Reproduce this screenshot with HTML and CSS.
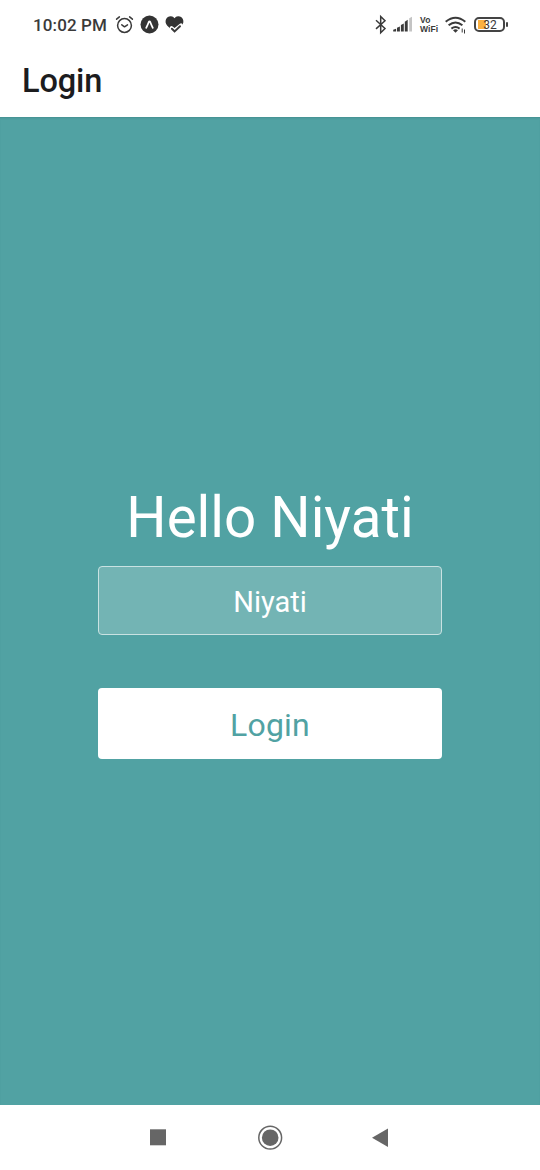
FILE: index.html
```html
<!DOCTYPE html>
<html lang="en">
<head>
<meta charset="utf-8">
<title>Login</title>
<link rel="stylesheet" href="styles.css">
</head>
<body>
<div class="screen">
  <div class="status">
    <span class="clock">10:02 PM</span>
    <svg class="status-left" width="74" height="24" viewBox="114 13 74 24" fill="none" stroke="#3a3a3a" stroke-linecap="round" stroke-linejoin="round">
      <circle cx="124.500" cy="25.500" r="6.900" stroke-width="1.500"/>
      <path d="M116.600 19.200l2.800-2.300M129.600 16.900l2.800 2.300" stroke-width="1.500"/>
      <path d="M121.800 24.800l2.700 2 3-2" stroke-width="1.500"/>
      <circle cx="149.500" cy="24.500" r="9" fill="#333" stroke="none"/>
      <path d="M146.200 27.800q1.300-2.500 2.500-5.600.8-1.600 1.600 0 1.200 3.100 2.500 5.600" stroke="#fff" stroke-width="1.800"/>
      <path d="M174.500 32.500L167.300 25.800C163.400 21.300 166.800 16 171 16.300Q173.200 16.500 174.500 18.300Q175.800 16.500 178 16.300C182.200 16 185.600 21.300 181.700 25.800Z" fill="#333" stroke="none"/>
      <path d="M171.500 28l3 2.500 6.500-5.300" stroke="#fff" stroke-width="3.600"/>
      <path d="M171.900 28.800l2.800 2.600 5.300-5.200" stroke-width="2"/>
    </svg>
    <svg class="status-radio" width="38" height="24" viewBox="375 13 38 24" fill="none" stroke="#3a3a3a">
      <path d="M376 20.300l9 8.200-4.300 4.200V16.500l4.300 4.200-9 8.200" stroke-width="1.500"/>
      <g fill="#3a3a3a" stroke="none">
        <path d="M393.200 29.700l2.900-1v2.800h-2.900zM397 27.800l2.900-1.300v5H397zM400.900 25l2.900-1.600v8.100h-2.900zM404.800 21.700l2.900-1.900v11.700h-2.900z"/>
        <path d="M409.200 18.300l2.800-1.500v14.700h-2.800z" fill="#c4c4c4"/>
      </g>
    </svg>
    <span class="vowifi"><span>Vo</span><span>WiFi</span></span>
    <svg class="wifi" width="22" height="24" viewBox="445 13 22 24" fill="none" stroke="#3a3a3a" stroke-width="2">
      <path d="M445.700 21.800Q455.500 13.800 465.300 21.800M448.600 25.300Q455.500 19.800 462.400 25.300M451.400 28.600Q455.500 25.600 459.600 28.600"/>
      <path d="M453 30.200q2.500-1.800 5 0l-2.500 2.500z" fill="#3a3a3a" stroke="none"/>
      <path d="M462.200 28.500v4M464.500 29.500v4" stroke-width="1"/>
    </svg>
    <span class="battery"><span class="level">32</span></span>
  </div>
  <header class="appbar"><h1 class="title">Login</h1></header>
  <main class="content">
    <h2 class="greeting">Hello Niyati</h2>
    <div class="field">Niyati</div>
    <div class="button">Login</div>
  </main>
  <nav class="navbar">
    <svg width="540" height="65" viewBox="0 1105 540 65" fill="#666">
      <path d="M150 1129.300h16v16h-16z"/>
      <circle cx="270.200" cy="1137.700" r="8.300"/>
      <circle cx="270.200" cy="1137.700" r="11.400" fill="none" stroke="#666" stroke-width="1.500"/>
      <path d="M388 1128.500v18.500l-16-9.300z"/>
    </svg>
  </nav>
</div>
</body>
</html>
```
FILE: styles.css
```css
* { box-sizing: border-box; }
body { margin: 0; font-family: Roboto, sans-serif; background: #fff; }
.screen { width: 540px; height: 1170px; display: flex; flex-direction: column; overflow: hidden; }
.status { height: 49px; display: flex; align-items: flex-start; padding: 13px 0 0 33px; color: #3a3a3a; }
.clock { width: 74px; margin-right: 7px; font-size: 17px; line-height: 24px; font-weight: 500; letter-spacing: .12px; white-space: nowrap; }
.status-left { flex: none; }
.status-radio { flex: none; margin-left: 187px; }
.vowifi { width: 19px; margin: 3px 6px 0 7px; display: flex; flex-direction: column; font-family: "Liberation Sans", sans-serif; font-size: 8.5px; line-height: 9px; font-weight: 700; letter-spacing: .1px; white-space: nowrap; }
.wifi { flex: none; }
.battery { position: relative; width: 31px; height: 15px; margin: 4px 0 0 7px; border: 2px solid #444; border-radius: 5px; background: linear-gradient(#fbb040, #fbb040) 2px 1px / 8px 9px no-repeat; }
.battery::after { content: ""; position: absolute; right: -5px; top: 3px; width: 2px; height: 5px; border-radius: 1px; background: #444; }
.level { display: block; text-align: center; font-size: 12px; line-height: 12px; font-weight: 400; padding-left: 1px; }
.appbar { height: 68px; padding-left: 22px; display: flex; align-items: center; }
.title { margin: 0; padding-bottom: 5px; font-size: 32.5px; line-height: 38px; font-weight: 500; color: #1c1c1e; letter-spacing: -.1px; }
.content { height: 988px; padding-top: 368px; display: flex; flex-direction: column; align-items: center; background: #51a2a3; box-shadow: inset 0 2px 2px -1px #458f90; }
.greeting { margin: 0 0 15px; font-size: 56.5px; line-height: 66px; font-weight: 400; letter-spacing: 0; color: #fff; white-space: nowrap; }
.field { width: 344px; height: 69px; margin-bottom: 53px; display: flex; align-items: center; justify-content: center; padding-top: 3px; border: 1px solid #c9e2e2; border-radius: 4px; background: #73b4b4; color: #fff; font-size: 29px; }
.button { width: 344px; height: 71px; display: flex; align-items: center; justify-content: center; padding-top: 3px; border-radius: 4px; background: #fff; color: #51a2a3; font-size: 32px; letter-spacing: .2px; }
.navbar { height: 65px; background: #fff; }
```
